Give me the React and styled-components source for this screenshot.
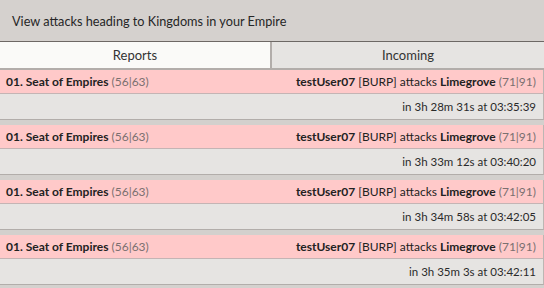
import React from "react";
import styled, { createGlobalStyle } from "styled-components";

const Global = createGlobalStyle`
  html, body { margin: 0; padding: 0; background: #e6e4e2; }
  body { font-family: "Lato", "Open Sans", sans-serif; font-size: 13px; color: #1e1e1e; }
  * { box-sizing: border-box; }
`;

const Page = styled.div`
  width: 544px;
  height: 288px;
  overflow: hidden;
  display: flex;
  flex-direction: column;
  background: #d4d1ce;
`;

const Header = styled.div`
  height: 42px;
  padding: 0 12px;
  display: flex;
  align-items: center;
  background: #d5d1ce;
  border-bottom: 1px solid #6d6865;
  font-size: 12.7px;
  color: #262626;
`;

const Tabs = styled.div`
  display: grid;
  grid-template-columns: 270px 1fr;
  border-bottom: 2px solid #b2adaa;
`;

const Tab = styled.div`
  height: 26px;
  display: flex;
  align-items: center;
  justify-content: center;
  font-size: 13px;
  color: #333;
  background: ${(p) => (p.$active ? "#fafaf8" : "#e6e4e2")};
  border-left: ${(p) => (p.$active ? "none" : "2px solid #b2adaa")};
`;

const List = styled.div`
  display: flex;
  flex-direction: column;
  gap: 5px;
  background: #d3d0cd;
`;

const Card = styled.div`
  display: flex;
  flex-direction: column;
  border-right: 1px solid #bcb6b3;
  border-bottom: 1px solid #b2adaa;
`;

const TitleRow = styled.div`
  height: 24px;
  padding: 0 7px 0 6px;
  display: flex;
  align-items: center;
  justify-content: space-between;
  background: #ffc9c9;
  border-bottom: 1px solid #c4b4b4;
  font-size: 12px;
`;

const Bold = styled.span`
  font-weight: 700;
  color: #222;
`;

const Coords = styled.span`
  color: #7a7070;
`;

const Plain = styled.span`
  color: #222;
`;

const TimeRow = styled.div`
  height: 25px;
  padding: 0 7px;
  display: flex;
  align-items: center;
  justify-content: flex-end;
  background: #e6e4e2;
  font-size: 11.5px;
  color: #2a2a2a;
`;

const attacks = [
  "in 3h 28m 31s at 03:35:39",
  "in 3h 33m 12s at 03:40:20",
  "in 3h 34m 58s at 03:42:05",
  "in 3h 35m 3s at 03:42:11",
];

export default function App() {
  return (
    <>
      <Global />
      <Page>
        <Header>View attacks heading to Kingdoms in your Empire</Header>
        <Tabs>
          <Tab $active>Reports</Tab>
          <Tab>Incoming</Tab>
        </Tabs>
        <List>
          {attacks.map((t) => (
            <Card key={t}>
              <TitleRow>
                <span>
                  <Bold>01. Seat of Empires</Bold> <Coords>(56|63)</Coords>
                </span>
                <span>
                  <Bold>testUser07</Bold> <Plain>[BURP] attacks</Plain>{" "}
                  <Bold>Limegrove</Bold> <Coords>(71|91)</Coords>
                </span>
              </TitleRow>
              <TimeRow>{t}</TimeRow>
            </Card>
          ))}
        </List>
      </Page>
    </>
  );
}
